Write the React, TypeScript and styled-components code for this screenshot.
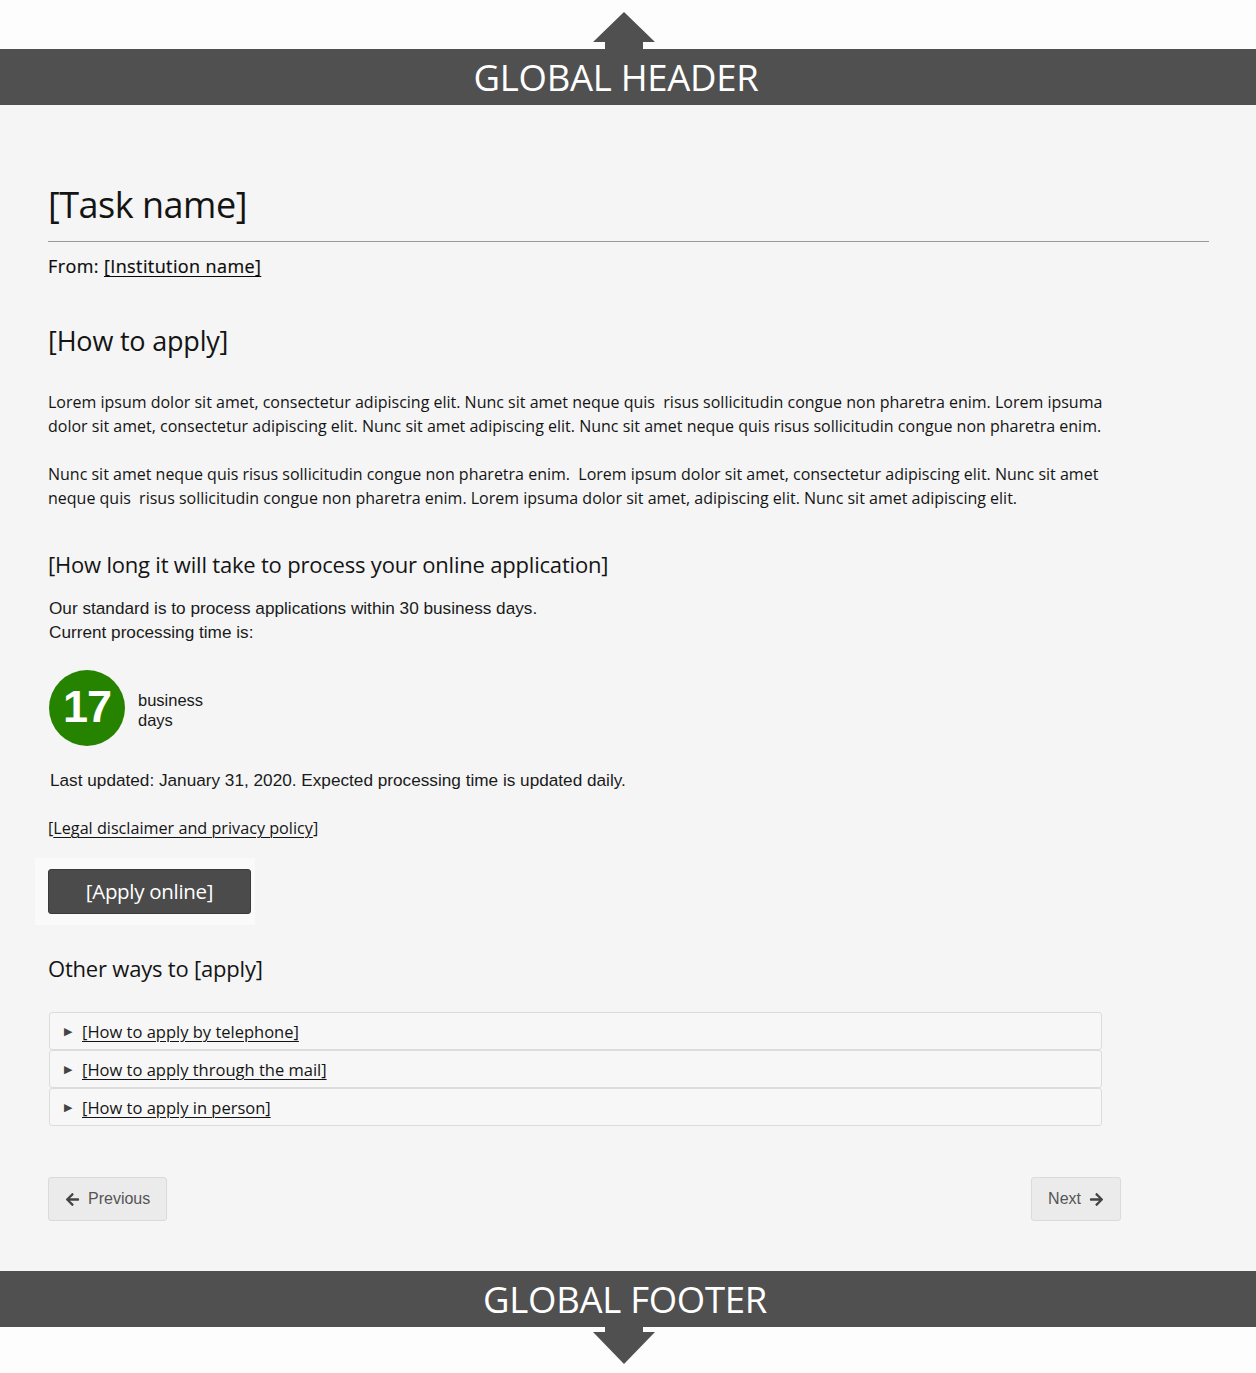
import React from 'react';
import styled, { createGlobalStyle } from 'styled-components';
import { FaArrowLeft, FaArrowRight } from 'react-icons/fa';

const GlobalStyle = createGlobalStyle`
  html, body {
    margin: 0;
    padding: 0;
    background: #fdfdfd;
  }
  body {
    font-family: 'Open Sans', 'Liberation Sans', sans-serif;
    color: #141414;
  }
`;

const BANNER = '#505050';

const Banner = styled.div<{ $flip?: boolean }>`
  display: flex;
  flex-direction: ${({ $flip }) => ($flip ? 'column-reverse' : 'column')};
`;

const ArrowZone = styled.div<{ $flip?: boolean }>`
  height: ${({ $flip }) => ($flip ? '47px' : '49px')};
  display: flex;
  justify-content: center;
  align-items: ${({ $flip }) => ($flip ? 'flex-start' : 'flex-end')};
  padding-right: 8px;
  background: #fdfdfd;
`;

const Bar = styled.div<{ $shift: number }>`
  height: 56px;
  background: ${BANNER};
  color: #fff;
  display: flex;
  align-items: center;
  justify-content: center;
  font-size: 36.5px;
  letter-spacing: -0.3px;
  padding-left: ${({ $shift }) => ($shift < 0 ? 0 : $shift)}px;
  padding-right: ${({ $shift }) => ($shift < 0 ? -$shift : 0)}px;
`;

const Main = styled.main`
  background: #f5f5f5;
  padding: 76px 47px 50px 48px;
`;

const Title = styled.h1`
  margin: 0;
  font-size: 36px;
  line-height: 48px;
  font-weight: 400;
  letter-spacing: -0.5px;
`;

const Rule = styled.hr`
  margin: 12px 0 0;
  border: 0;
  border-top: 1px solid #999;
`;

const From = styled.div`
  margin-top: 12px;
  font-size: 18px;
  line-height: 24px;
  letter-spacing: 0.4px;
  color: #0a0a0a;
  -webkit-text-stroke: 0.2px #0a0a0a;
`;

const Link = styled.a`
  color: inherit;
  text-decoration: underline;
  text-underline-offset: 3px;
  text-decoration-thickness: 1px;
`;

const SectionTitle = styled.h2<{ $size: number; $top: number }>`
  margin: ${({ $top }) => $top}px 0 0;
  font-size: ${({ $size }) => $size}px;
  line-height: ${({ $size }) => Math.round($size * 1.35)}px;
  font-weight: 400;
  letter-spacing: -0.2px;
`;

const Para = styled.p<{ $top: number }>`
  margin: ${({ $top }) => $top}px 0 0;
  font-size: 16px;
  line-height: 24px;
  white-space: nowrap;
`;

const ArialText = styled.p<{ $top: number; $indent?: number }>`
  margin: ${({ $top }) => $top}px 0 0 ${({ $indent }) => $indent ?? 1}px;
  font-family: 'Liberation Sans', Arial, sans-serif;
  font-size: 17.2px;
  line-height: 24px;
  color: #1a1a1a;
`;

const TimeRow = styled.div`
  margin-top: 26px;
  display: flex;
  align-items: center;
  gap: 13px;
  margin-left: 1px;
`;

const Circle = styled.div`
  width: 76px;
  height: 76px;
  border-radius: 50%;
  background: #268300;
  color: #fff;
  display: flex;
  align-items: center;
  justify-content: center;
  font-family: 'Liberation Sans', Arial, sans-serif;
  font-weight: 700;
  font-size: 45px;
  letter-spacing: -1px;
  padding-bottom: 2px;
  box-sizing: border-box;
`;

const Units = styled.div`
  font-family: 'Liberation Sans', Arial, sans-serif;
  font-size: 16.5px;
  line-height: 20px;
  color: #1a1a1a;
  padding-top: 4px;
`;

const LegalLine = styled.div`
  margin-top: 24px;
  font-size: 16.2px;
  line-height: 24px;
`;

const ButtonHalo = styled.div`
  margin: 18px 0 0 -13px;
  display: inline-block;
  padding: 11px 4px 11px 13px;
  background: #fafafa;
`;

const PrimaryButton = styled.button`
  width: 203px;
  height: 45px;
  padding-bottom: 2px;
  background: #4b4b4b;
  color: #fff;
  border: 1px solid #3a3a3a;
  border-radius: 3px;
  font-family: 'Open Sans', sans-serif;
  font-size: 20.5px;
  letter-spacing: -0.3px;
  cursor: pointer;
`;

const Accordion = styled.div`
  margin-top: 29px;
  width: 1053px;
  margin-left: 1px;
`;

const AccordionItem = styled.div`
  height: 38px;
  box-sizing: border-box;
  border: 1px solid #dcdcdc;
  border-radius: 3px;
  background: #f7f7f7;
  display: flex;
  align-items: center;
  padding-left: 14px;
  font-size: 16.5px;
`;

const Caret = styled.span`
  font-family: 'DejaVu Sans', sans-serif;
  font-size: 11px;
  color: #444;
  width: 18px;
`;

const Nav = styled.div`
  margin-top: 51px;
  width: 1073px;
  display: flex;
  justify-content: space-between;
`;

const NavButton = styled.button`
  height: 44px;
  box-sizing: border-box;
  padding: 0 16px;
  display: flex;
  align-items: center;
  gap: 8px;
  background: #ebebeb;
  border: 1px solid #dadada;
  border-radius: 3px;
  color: #555;
  font-family: 'Liberation Sans', Arial, sans-serif;
  font-size: 16px;
  cursor: pointer;
  svg {
    color: #444;
    font-size: 15px;
  }
`;

const UpArrow = () => (
  <svg width="62" height="37" viewBox="0 0 62 37">
    <polygon points="31,0 62,30 50,30 50,37 12,37 12,30 0,30" fill={BANNER} />
  </svg>
);

const DownArrow = () => (
  <svg width="62" height="37" viewBox="0 0 62 37">
    <polygon points="12,0 50,0 50,5 62,5 31,37 0,5 12,5" fill={BANNER} />
  </svg>
);

const ways = [
  '[How to apply by telephone]',
  '[How to apply through the mail]',
  '[How to apply in person]',
];

export default function App() {
  return (
    <>
      <GlobalStyle />
      <Banner>
        <ArrowZone>
          <UpArrow />
        </ArrowZone>
        <Bar $shift={-24}>GLOBAL HEADER</Bar>
      </Banner>

      <Main>
        <Title>[Task name]</Title>
        <Rule />
        <From>
          From: <Link href="#">[Institution name]</Link>
        </From>

        <SectionTitle $size={27} $top={45}>[How to apply]</SectionTitle>
        <Para $top={31}>
          Lorem ipsum dolor sit amet, consectetur adipiscing elit. Nunc sit amet neque quis&nbsp; risus sollicitudin congue non pharetra enim. Lorem ipsuma
          <br />
          dolor sit amet, consectetur adipiscing elit. Nunc sit amet adipiscing elit. Nunc sit amet neque quis risus sollicitudin congue non pharetra enim.
        </Para>
        <Para $top={24}>
          Nunc sit amet neque quis risus sollicitudin congue non pharetra enim.&nbsp; Lorem ipsum dolor sit amet, consectetur adipiscing elit. Nunc sit amet
          <br />
          neque quis&nbsp; risus sollicitudin congue non pharetra enim. Lorem ipsuma dolor sit amet, adipiscing elit. Nunc sit amet adipiscing elit.
        </Para>

        <SectionTitle $size={22} $top={39}>[How long it will take to process your online application]</SectionTitle>
        <ArialText $top={17}>
          Our standard is to process applications within 30 business days.
          <br />
          Current processing time is:
        </ArialText>

        <TimeRow>
          <Circle>17</Circle>
          <Units>
            business
            <br />
            days
          </Units>
        </TimeRow>

        <ArialText $top={22} $indent={2}>
          Last updated: January 31, 2020. Expected processing time is updated daily.
        </ArialText>

        <LegalLine>
          [<Link href="#">Legal disclaimer and privacy policy</Link>]
        </LegalLine>

        <ButtonHalo>
          <PrimaryButton>[Apply online]</PrimaryButton>
        </ButtonHalo>

        <SectionTitle $size={22} $top={28}>Other ways to [apply]</SectionTitle>

        <Accordion>
          {ways.map((w) => (
            <AccordionItem key={w}>
              <Caret>▶</Caret>
              <Link href="#">{w}</Link>
            </AccordionItem>
          ))}
        </Accordion>

        <Nav>
          <NavButton>
            <FaArrowLeft />
            Previous
          </NavButton>
          <NavButton>
            Next
            <FaArrowRight />
          </NavButton>
        </Nav>
      </Main>

      <Banner $flip>
        <ArrowZone $flip>
          <DownArrow />
        </ArrowZone>
        <Bar $shift={-6}>GLOBAL FOOTER</Bar>
      </Banner>
    </>
  );
}
